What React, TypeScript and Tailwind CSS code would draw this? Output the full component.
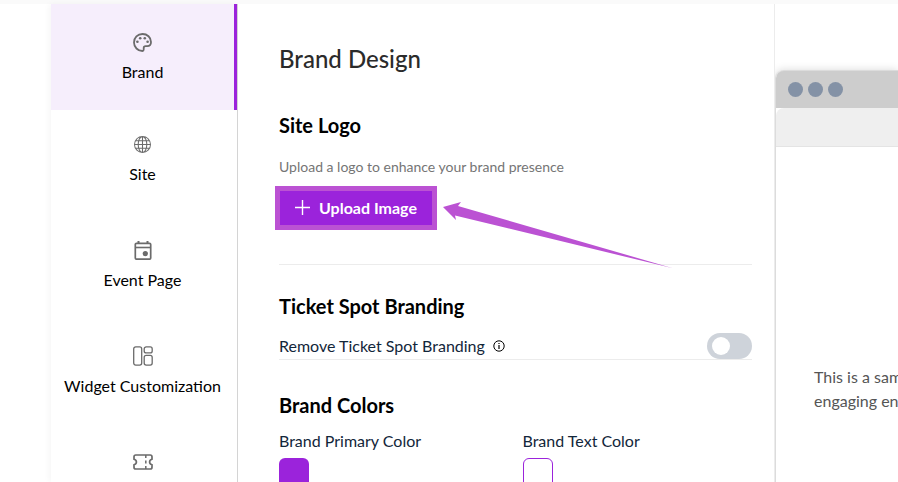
import type { ReactNode } from "react";
import { BsGlobe } from "react-icons/bs";

const PaletteIcon = () => (
  <svg width="19" height="19" viewBox="0 0 19 19" fill="none" aria-hidden="true">
    <path
      d="M9.5 1C4.6 1 1 4.8 1 9.4C1 14.2 4.8 18 9.4 18C10.4 18 10.7 17.4 10.7 16.5V14.9C10.7 13.7 11.5 13.1 12.7 13.1H14.2C16.6 13.1 18 11.2 18 8.9C18 4.3 14.2 1 9.5 1Z"
      stroke="currentColor"
      strokeWidth="1.8"
    />
    <circle cx="4.4" cy="8.8" r="1.3" fill="currentColor" />
    <circle cx="7.2" cy="5.3" r="1.3" fill="currentColor" />
    <circle cx="11.8" cy="5.3" r="1.3" fill="currentColor" />
    <circle cx="14.6" cy="8.8" r="1.3" fill="currentColor" />
  </svg>
);

const CalendarIcon = () => (
  <svg width="18" height="19" viewBox="0 0 18 19" fill="none" aria-hidden="true">
    <rect x="1.3" y="2.3" width="15.4" height="15.9" rx="1.2" stroke="currentColor" strokeWidth="1.7" />
    <path d="M4.5 0V2.5M13.5 0V2.5" stroke="currentColor" strokeWidth="2" />
    <path d="M1.3 6.5H16.7" stroke="currentColor" strokeWidth="1.6" />
    <circle cx="11.3" cy="12.6" r="2.6" fill="currentColor" />
  </svg>
);

const WidgetIcon = () => (
  <svg width="20" height="20" viewBox="0 0 20 20" fill="none" stroke="currentColor" strokeWidth="1.3" aria-hidden="true">
    <rect x="0.7" y="0.9" width="8" height="18.2" rx="2" />
    <rect x="11.2" y="0.9" width="8" height="6" rx="2" />
    <rect x="11.2" y="9.4" width="8" height="9.7" rx="2" />
  </svg>
);

const TicketIcon = () => (
  <svg width="20" height="16" viewBox="0 0 20 16" fill="none" stroke="currentColor" strokeWidth="1.7" aria-hidden="true">
    <path d="M2.8 1H17.2C18.2 1 19 1.8 19 2.8V5.2C17.5 5.6 16.6 6.6 16.6 8C16.6 9.4 17.5 10.4 19 10.8V13.2C19 14.2 18.2 15 17.2 15H2.8C1.8 15 1 14.2 1 13.2V10.8C2.5 10.4 3.4 9.4 3.4 8C3.4 6.6 2.5 5.6 1 5.2V2.8C1 1.8 1.8 1 2.8 1Z" />
    <path d="M12.8 1V4M12.8 6.4V9.6M12.8 12V15" strokeWidth="1.5" />
  </svg>
);

const InfoIcon = () => (
  <svg width="12" height="12" viewBox="0 0 12 12" fill="none" stroke="black" aria-hidden="true">
    <circle cx="6" cy="6" r="5.2" strokeWidth="1" />
    <path d="M6 5V9M6 2.9V4.1" strokeWidth="1.2" />
  </svg>
);

interface INavItem {
  id: string;
  label?: string;
  icon: ReactNode;
}

const navItems: INavItem[] = [
  { id: "Brand", label: "Brand", icon: <PaletteIcon /> },
  { id: "Site", label: "Site", icon: <BsGlobe size={17} /> },
  { id: "Event Page", label: "Event Page", icon: <CalendarIcon /> },
  { id: "Widget Customization", label: "Widget Customization", icon: <WidgetIcon /> },
  { id: "Tickets", icon: <TicketIcon /> },
];

const Sidebar = () => (
  <nav className="flex w-[187px] shrink-0 flex-col border-r border-[#d4d4d4] bg-white shadow-[-2px_0_6px_rgba(0,0,0,0.04)]">
    {navItems.map((item, index) => (
      <a
        key={item.id}
        href="#"
        aria-label={item.id}
        className={
          index === 0
            ? "flex h-[106px] shrink-0 flex-col items-center gap-2 border-r-[3px] border-[#9b23db] bg-[#f6eefc] pt-7"
            : "flex h-[106px] shrink-0 flex-col items-center gap-2 border-r-[3px] border-transparent pt-6"
        }
      >
        <span className="flex h-5 items-center text-[#6b6b6b]">{item.icon}</span>
        {item.label && (
          <span className="text-base leading-6 whitespace-nowrap text-black">{item.label}</span>
        )}
      </a>
    ))}
  </nav>
);

const UploadButton = () => (
  <div className="relative -ml-1 w-fit">
    <button
      type="button"
      className="flex h-11 items-center gap-2 border-[5px] border-[#bb52d3] bg-[#9b23db] px-[15px] text-base font-bold whitespace-nowrap text-white"
    >
      <svg width="16" height="16" viewBox="0 0 16 16" stroke="white" strokeWidth="1.4" aria-hidden="true">
        <path d="M7.5 0V15M0 7.5H15" />
      </svg>
      Upload Image
    </button>
    {/* pointer to the upload button */}
    <svg
      className="pointer-events-none absolute top-4 left-full ml-1.5"
      width="230"
      height="68"
      viewBox="0 0 230 68"
      fill="#bb52d3"
      aria-hidden="true"
    >
      <path d="M0 5L18 0L15 4L229 66L12 13.5L13 18Z" />
    </svg>
  </div>
);

const BrandPanel = () => (
  <main className="w-[537px] shrink-0 border-r border-[#ececec] bg-white pt-[39px] pr-[22px] pl-[41px]">
    <h1 className="text-2xl leading-8 font-medium text-[#2b2b2b]">Brand Design</h1>

    <section className="border-b border-[#ececec] pt-9 pb-[34px]">
      <h2 className="text-xl leading-7 font-bold text-black">Site Logo</h2>
      <p className="mt-[18px] mb-[9px] text-sm leading-5 text-[#757575]">
        Upload a logo to enhance your brand presence
      </p>
      <UploadButton />
    </section>

    <section className="border-b border-[#ececec] pt-[27px]">
      <h2 className="text-xl leading-7 font-bold text-black">Ticket Spot Branding</h2>
      <div className="mt-[13px] flex h-[26px] items-center gap-2">
        <label htmlFor="remove-branding" className="text-base leading-6 text-[#12263a]">
          Remove Ticket Spot Branding
        </label>
        <InfoIcon />
        <input
          id="remove-branding"
          type="checkbox"
          className="ml-auto h-[26px] w-[45px] appearance-none rounded-full bg-[#ced3da] p-1 before:ml-px before:block before:size-[18px] before:rounded-full before:bg-white checked:bg-[#9b23db]"
        />
      </div>
    </section>

    <section className="pt-[31px]">
      <h2 className="text-xl leading-7 font-bold text-black">Brand Colors</h2>
      <div className="mt-2.5 grid grid-cols-2 gap-3.5 text-base leading-6 text-[#12263a]">
        <div>
          <p>Brand Primary Color</p>
          <button
            type="button"
            aria-label="Brand Primary Color"
            className="mt-[5px] block size-[30px] rounded-md bg-[#9b23db]"
          />
        </div>
        <div>
          <p>Brand Text Color</p>
          <button
            type="button"
            aria-label="Brand Text Color"
            className="mt-[5px] block size-[30px] rounded-md border border-[#9b23db] bg-white"
          />
        </div>
      </div>
    </section>
  </main>
);

const Preview = () => (
  <aside className="flex min-w-0 flex-1 flex-col overflow-hidden bg-white pt-[66px]">
    <div className="flex-1 rounded-tl-lg border-l border-[#dcdcdc] shadow-[0_0_8px_rgba(0,0,0,0.15)]">
      <div className="flex h-[38px] items-center gap-[5px] rounded-tl-lg border-t border-[#dcdcdc] bg-[#cdcdcd] pl-3">
        <span className="size-[15px] shrink-0 rounded-full bg-[#8492a6]" />
        <span className="size-[15px] shrink-0 rounded-full bg-[#8492a6]" />
        <span className="size-[15px] shrink-0 rounded-full bg-[#8492a6]" />
      </div>
      <div className="h-[39px] rounded-tl-lg border-b border-[#e4e4e4] bg-[#efefef]" />
      <p className="pt-[218px] pl-[38px] text-base leading-6 whitespace-nowrap text-[#555555]">
        This is a sam
        <br />
        engaging en
      </p>
    </div>
  </aside>
);

const App = () => {
  return (
    <div className="flex h-screen flex-col overflow-hidden bg-white font-['Lato',sans-serif]">
      <div className="h-1 shrink-0 bg-[#fafafa]" />
      <div className="flex min-h-0 flex-1 pl-[51px]">
        <Sidebar />
        <BrandPanel />
        <Preview />
      </div>
    </div>
  );
};

export default App;
